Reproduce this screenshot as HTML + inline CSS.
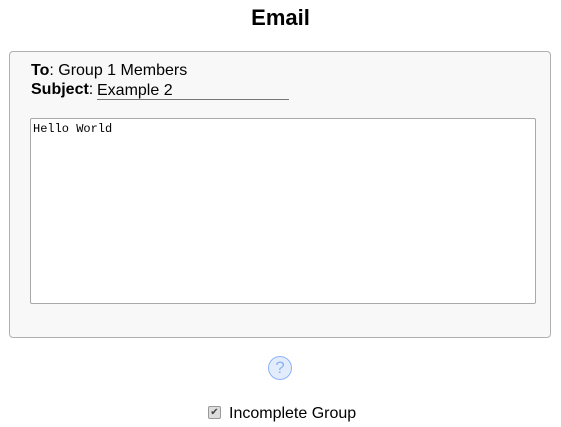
<!DOCTYPE html>
<html><head><style>
body{margin:0;width:561px;height:427px;background:#fff;font-family:"Liberation Sans",sans-serif;position:relative;overflow:hidden}
.a{position:absolute}
h1{position:absolute;left:0;width:561px;top:5px;margin:0;text-align:center;font-size:22px;font-weight:bold;line-height:26px}
.box{left:9px;top:51px;width:540px;height:285px;background:#f8f8f8;border:1px solid #b0b0b0;border-radius:4px}
.t{font-size:16px;line-height:19px;color:#000}
.ta{left:30px;top:118px;width:504px;height:184px;background:#fff;border:1px solid #a9a9a9;border-radius:2px;font-family:"Liberation Mono",monospace;font-size:12px;padding:3px 2px;box-sizing:border-box;width:506px;height:186px}
</style></head><body>
<h1>Email</h1>
<div class="a box"></div>
<div class="a t" style="left:31px;top:61px"><b>To</b>: Group 1 Members</div>
<div class="a t" style="left:31px;top:80px"><b>Subject</b>:</div>
<div class="a t" style="left:97px;top:81px;width:192px;border-bottom:1px solid #777;height:18px;">Example 2</div>
<div class="a ta">Hello World</div>
<div class="a" style="left:268px;top:356px;width:22px;height:22px;border:1.5px solid #8ab4f8;border-radius:50%;background:#e3ecfb;color:#8ab4f8;font-size:17px;text-align:center;line-height:22px">?</div>
<div class="a" style="left:208px;top:406px;width:11px;height:11px;border:1px solid #999;border-radius:2px;background:#ddd;font-size:10px;line-height:11px;text-align:center;color:#444">✔</div>
<div class="a t" style="left:229px;top:404px">Incomplete Group</div>
</body></html>
